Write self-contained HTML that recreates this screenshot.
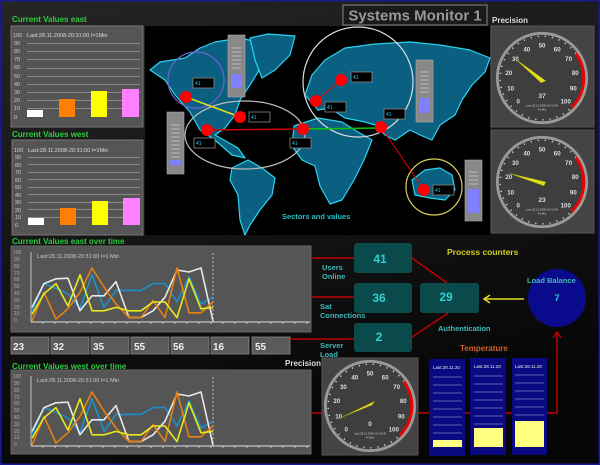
<!DOCTYPE html>
<html><head><meta charset="utf-8"><style>
html,body{margin:0;padding:0;background:#111;}
svg{display:block;font-family:"Liberation Sans",sans-serif;}
</style></head><body>
<svg width="600" height="465" viewBox="0 0 600 465" xmlns="http://www.w3.org/2000/svg">
<defs>
<linearGradient id="bg" x1="0" y1="0" x2="0.3" y2="1"><stop offset="0" stop-color="#252525"/><stop offset="1" stop-color="#060606"/></linearGradient>
<g id="gauge">
<circle r="48" fill="#3e3e3e"/>
<circle r="47" fill="none" stroke="#9a9a9a" stroke-width="3"/>
<circle r="44" fill="none" stroke="#fff" stroke-width="1.6" stroke-dasharray="1 6.5"/>
<path d="M35.6,-25.9 A44 44 0 0 1 31.1,31.1" fill="none" stroke="#e00" stroke-width="3"/>
<g fill="#ddd" font-size="6.5" font-weight="bold" text-anchor="middle">
<text x="-25" y="27">0</text><text x="-33" y="13">10</text><text x="-35" y="-3">20</text><text x="-28" y="-18">30</text><text x="-16" y="-28">40</text><text x="0" y="-32">50</text><text x="16" y="-28">60</text><text x="28" y="-18">70</text><text x="35" y="-3">80</text><text x="33" y="13">90</text><text x="25" y="27">100</text>
</g>
<text x="0" y="30" font-size="3" fill="#ccc" text-anchor="middle">Last:28.11.2008-20:31:00</text>
<text x="0" y="34" font-size="3" fill="#ccc" text-anchor="middle">I=1Min</text>
</g>
</defs>
<rect width="600" height="465" fill="url(#bg)"/>
<rect x="0.5" y="0.5" width="599" height="464" fill="none" stroke="#1a1a90" stroke-width="2"/>

<rect x="343" y="5" width="144" height="20" fill="#1a1a1a" stroke="#888" stroke-width="1"/>
<text x="415" y="20.5" font-size="15" font-weight="bold" fill="#999" text-anchor="middle">Systems Monitor 1</text>

<g font-weight="bold" font-size="8" fill="#2ecc40">
<text x="12" y="22">Current Values east</text>
<text x="12" y="137">Current Values west</text>
<text x="12" y="244">Current Values east over time</text>
<text x="12" y="369">Current Values west over time</text>
</g>
<rect x="11" y="26" width="132" height="101" fill="#555" stroke="#777"/>
<rect x="12" y="140" width="131" height="95" fill="#555" stroke="#777"/>
<g font-size="5.5" fill="#ddd">
<text x="27" y="37">Last:28.11.2008-20:31:00 I=1Min</text>
<text x="28" y="152">Last:28.11.2008-20:31:00 I=1Min</text>
</g>
<g stroke="#8a8a8a" stroke-width="1">
<line x1="27" y1="43.5" x2="140" y2="43.5"/><line x1="27" y1="51.5" x2="140" y2="51.5"/><line x1="27" y1="59.5" x2="140" y2="59.5"/><line x1="27" y1="68.5" x2="140" y2="68.5"/><line x1="27" y1="76.5" x2="140" y2="76.5"/><line x1="27" y1="84.5" x2="140" y2="84.5"/><line x1="27" y1="92.5" x2="140" y2="92.5"/><line x1="27" y1="100.5" x2="140" y2="100.5"/><line x1="27" y1="108.5" x2="140" y2="108.5"/>
<line x1="28" y1="157.5" x2="140" y2="157.5"/><line x1="28" y1="164.5" x2="140" y2="164.5"/><line x1="28" y1="172.5" x2="140" y2="172.5"/><line x1="28" y1="179.5" x2="140" y2="179.5"/><line x1="28" y1="187.5" x2="140" y2="187.5"/><line x1="28" y1="194.5" x2="140" y2="194.5"/><line x1="28" y1="202.5" x2="140" y2="202.5"/><line x1="28" y1="209.5" x2="140" y2="209.5"/><line x1="28" y1="217.5" x2="140" y2="217.5"/>
</g>
<g font-size="5.5" fill="#ccc">
<text x="13" y="37">100</text><text x="14" y="45">90</text><text x="14" y="53">80</text><text x="14" y="61">70</text><text x="14" y="69">60</text><text x="14" y="78">50</text><text x="14" y="86">40</text><text x="14" y="94">30</text><text x="14" y="102">20</text><text x="14" y="110">10</text><text x="14" y="119">0</text>
<text x="14" y="152">100</text><text x="15" y="159">90</text><text x="15" y="167">80</text><text x="15" y="174">70</text><text x="15" y="182">60</text><text x="15" y="189">50</text><text x="15" y="197">40</text><text x="15" y="204">30</text><text x="15" y="212">20</text><text x="15" y="219">10</text><text x="15" y="227">0</text>
</g>
<rect x="27" y="110" width="16" height="7" fill="#fff"/>
<rect x="59" y="99" width="16" height="18" fill="#ff7f00"/>
<rect x="91" y="91" width="16" height="26" fill="#ffff00"/>
<rect x="122" y="89" width="17" height="28" fill="#ff80ff"/>
<rect x="28" y="218" width="16" height="7" fill="#fff"/>
<rect x="60" y="208" width="16" height="17" fill="#ff7f00"/>
<rect x="92" y="201" width="16" height="24" fill="#ffff00"/>
<rect x="123" y="198" width="17" height="27" fill="#ff80ff"/>

<rect x="145" y="26" width="345" height="209" fill="#000"/>
<g fill="#0b5f80" stroke="#2ad4f0" stroke-width="1.2" stroke-linejoin="round">
<path d="M150,70 L160,62 L185,58 L200,48 L215,42 L240,38 L258,42 L265,55 L258,72 L250,85 L240,100 L235,115 L225,128 L215,135 L238,148 L245,158 L232,155 L215,140 L200,130 L190,112 L175,95 L165,80 Z"/>
<path d="M250,38 L268,34 L295,36 L290,55 L275,70 L262,78 L255,60 Z"/>
<path d="M232,168 L248,160 L262,168 L275,178 L272,195 L260,210 L250,225 L245,235 L240,220 L238,195 L230,180 Z"/>
<path d="M305,95 L312,75 L325,60 L345,48 L375,44 L410,42 L440,45 L470,50 L490,58 L485,72 L472,85 L462,100 L455,115 L440,125 L432,140 L420,135 L410,130 L395,140 L385,135 L375,125 L365,122 L345,118 L330,108 L318,110 Z"/>
<path d="M294,126 L318,118 L342,122 L358,132 L372,140 L364,160 L354,180 L342,200 L330,204 L320,186 L315,166 L302,160 L292,146 Z"/>
<path d="M412,180 L425,170 L440,168 L452,175 L455,190 L445,200 L430,198 L415,195 Z"/>
</g>
<g fill="none" stroke-width="1.2">
<circle cx="196" cy="80" r="28" stroke="#7060d0"/>
<ellipse cx="245" cy="135" rx="60" ry="34" stroke="#bbb"/>
<circle cx="358" cy="82" r="55" stroke="#ddd"/>
<circle cx="434" cy="187" r="28" stroke="#d8d060"/>
</g>
<line x1="186" y1="97" x2="240" y2="117" stroke="#e0e020" stroke-width="1.5"/>
<line x1="207" y1="130" x2="303" y2="129" stroke="#c00" stroke-width="1.5"/>
<line x1="303" y1="129" x2="381" y2="128" stroke="#10c010" stroke-width="1.5"/>
<line x1="316" y1="101" x2="341" y2="80" stroke="#e00" stroke-width="1"/>
<line x1="381" y1="127" x2="424" y2="190" stroke="#e00" stroke-width="1"/>
<g fill="#f00">
<circle cx="186" cy="97" r="6"/><circle cx="207" cy="130" r="6"/><circle cx="240" cy="117" r="6"/><circle cx="303" cy="129" r="6"/><circle cx="316" cy="101" r="6"/><circle cx="341" cy="80" r="6"/><circle cx="381" cy="127" r="6"/><circle cx="424" cy="190" r="6"/>
</g>
<g fill="#000" stroke="#888" stroke-width="0.8">
<rect x="193" y="78" width="21" height="10"/><rect x="249" y="112" width="21" height="10"/><rect x="194" y="138" width="21" height="10"/><rect x="290" y="138" width="21" height="10"/><rect x="351" y="72" width="21" height="10"/><rect x="325" y="102" width="21" height="10"/><rect x="384" y="109" width="21" height="10"/><rect x="433" y="185" width="21" height="10"/>
</g>
<g font-size="5" fill="#2ad4f0">
<text x="195" y="85">41</text><text x="251" y="119">41</text><text x="196" y="145">41</text><text x="292" y="145">41</text><text x="353" y="79">41</text><text x="327" y="109">41</text><text x="386" y="116">41</text><text x="435" y="192">41</text>
</g>
<g>
<rect x="228" y="35" width="17" height="62" fill="#888" stroke="#aaa" stroke-width="0.6"/>
<rect x="231" y="74" width="11" height="14" fill="#8080ff"/>
<rect x="167" y="112" width="17" height="62" fill="#888" stroke="#aaa" stroke-width="0.6"/>
<rect x="170" y="160" width="11" height="5" fill="#8080ff"/>
<rect x="416" y="60" width="17" height="62" fill="#888" stroke="#aaa" stroke-width="0.6"/>
<rect x="419" y="98" width="11" height="15" fill="#8080ff"/>
<rect x="465" y="160" width="17" height="61" fill="#888" stroke="#aaa" stroke-width="0.6"/>
<rect x="468" y="189" width="11" height="24" fill="#8080ff"/>
</g>
<g stroke="#ccc" stroke-width="0.7">
<path d="M232,48h9M232,52h9M232,56h9M232,60h9M232,64h9M232,68h9"/>
<path d="M171,125h9M171,129h9M171,133h9M171,137h9M171,141h9M171,145h9M171,149h9M171,153h9M171,157h9"/>
<path d="M420,72h9M420,76h9M420,80h9M420,84h9M420,88h9M420,92h9"/>
<path d="M469,172h9M469,176h9M469,180h9M469,184h9"/>
</g>
<text x="282" y="219" font-size="7.5" font-weight="bold" fill="#20c0c0">Sectors and values</text>

<text x="492" y="23" font-size="8" font-weight="bold" fill="#ddd">Precision</text>
<rect x="491" y="26" width="103" height="101" fill="#444" stroke="#555"/>
<rect x="491" y="130" width="103" height="103" fill="#444" stroke="#555"/>
<g transform="translate(542,78) scale(0.95)"><use href="#gauge"/><text x="0" y="21" font-size="7" font-weight="bold" fill="#ddd" text-anchor="middle">37</text>
<polygon points="-28,-20 4,3 -1,5" fill="#e0e020" stroke="#aa0" stroke-width="0.5"/></g>
<g transform="translate(542,182) scale(0.95)"><use href="#gauge"/><text x="0" y="21" font-size="7" font-weight="bold" fill="#ddd" text-anchor="middle">23</text>
<polygon points="-34,-9 4,0 2,4" fill="#e0e020" stroke="#aa0" stroke-width="0.5"/></g>

<rect x="11" y="246" width="300" height="86" fill="#555" stroke="#666"/>
<rect x="11" y="370" width="300" height="84" fill="#555" stroke="#666"/>
<g font-size="5.5" fill="#ccc">
<text x="37" y="258">Last:28.11.2008-20:31:00 I=1 Min</text>
<text x="37" y="382">Last:28.11.2008-20:31:00 I=1 Min</text>
</g>
<g font-size="5" fill="#aaa">
<text x="13" y="254">100</text><text x="14" y="261">90</text><text x="14" y="268">80</text><text x="14" y="275">70</text><text x="14" y="281">60</text><text x="14" y="288">50</text><text x="14" y="295">40</text><text x="14" y="302">30</text><text x="14" y="309">20</text><text x="14" y="315">10</text><text x="14" y="322">0</text>
<text x="13" y="378">100</text><text x="14" y="385">90</text><text x="14" y="392">80</text><text x="14" y="399">70</text><text x="14" y="405">60</text><text x="14" y="412">50</text><text x="14" y="419">40</text><text x="14" y="426">30</text><text x="14" y="433">20</text><text x="14" y="439">10</text><text x="14" y="446">0</text>
</g>
<g id="lc">
<line x1="31" y1="252" x2="31" y2="322" stroke="#ddd" stroke-width="0.8"/>
<line x1="31" y1="322" x2="310" y2="322" stroke="#ddd" stroke-width="1"/>
<path d="M43,322v2M55,322v2M67,322v2M79,322v2M91,322v2M103,322v2M115,322v2M127,322v2M139,322v2M151,322v2M163,322v2M175,322v2M187,322v2M199,322v2M211,322v2M223,322v2M235,322v2M247,322v2M259,322v2M271,322v2M283,322v2M295,322v2M307,322v2" stroke="#ddd" stroke-width="0.8"/>
<line x1="213" y1="253" x2="213" y2="322" stroke="#ddd" stroke-width="0.8" stroke-dasharray="2 2"/>
<g fill="none" stroke-width="1.6" stroke-linejoin="round">
<polyline stroke="#1e90c8" points="32,310.8 44,283.6 56,288.4 68,293.8 80,308.8 92,274.8 104,307.4 116,290.4 129,290.4 141,290.4 153,283.6 165,283.6 177,302 189,276.8 201,304 213,297.2"/>
<polyline stroke="#e8e8e8" points="32,307.4 44,283.6 56,278.8 68,278.2 80,310.8 92,295.8 104,295.8 116,281.6 129,317.6 141,317.6 153,310.8 165,297.2 177,270 189,272 201,268 213,321"/>
<polyline stroke="#e88010" points="32,321 44,292.4 56,319 68,308.8 80,292.4 92,268 104,287 116,304 129,317.6 141,317.6 153,300.6 165,317.6 177,268 189,312.8 201,312.8 213,302"/>
<polyline stroke="#e8e820" points="32,314.2 44,293.8 56,283.6 68,306 80,274.8 92,310.8 104,310.8 116,307.4 129,310.8 141,310.8 153,302 165,302 177,317.6 189,278.8 201,308.8 213,307.4"/>
</g>
</g>
<use href="#lc" transform="translate(0,124)"/>

<g fill="#5a5a5a" stroke="#888" stroke-width="0.8">
<rect x="11" y="337" width="38" height="17"/><rect x="51" y="337" width="38" height="17"/><rect x="91" y="337" width="38" height="17"/><rect x="131" y="337" width="38" height="17"/><rect x="171" y="337" width="38" height="17"/><rect x="211" y="337" width="38" height="17"/><rect x="252" y="337" width="38" height="17"/>
</g>
<g font-size="10" font-weight="bold" fill="#eee">
<text x="13" y="350">23</text><text x="53" y="350">32</text><text x="93" y="350">35</text><text x="134" y="350">55</text><text x="173" y="350">56</text><text x="213" y="350">16</text><text x="255" y="350">55</text>
</g>

<g stroke="#c00000" stroke-width="1.5" fill="none">
<line x1="311" y1="258" x2="354" y2="258"/>
<line x1="311" y1="297" x2="354" y2="297"/>
<line x1="290" y1="339" x2="354" y2="339"/>
<line x1="412" y1="258" x2="447" y2="283"/>
<line x1="412" y1="337" x2="448" y2="313"/>
<polyline points="311,413 322,413"/>
<polyline points="418,413 429,413"/>
<polyline points="465,413 470,413"/>
<polyline points="506,413 512,413"/>
<polyline points="547,413 557,413 557,333"/>
<polyline points="553,338 557,332 561,338"/>
</g>
<g fill="#0a4a4a">
<rect x="354" y="243" width="58" height="30" rx="3"/>
<rect x="354" y="283" width="58" height="30" rx="3"/>
<rect x="354" y="323" width="58" height="29" rx="3"/>
<rect x="420" y="283" width="59" height="30" rx="3"/>
</g>
<g font-size="12" font-weight="bold" fill="#30d0d0" text-anchor="middle">
<text x="380" y="263">41</text><text x="379" y="302">36</text><text x="379" y="341">2</text><text x="446" y="301">29</text>
</g>
<circle cx="557" cy="298" r="29" fill="#0a0a8c"/>
<g font-size="7.5" font-weight="bold" fill="#40b8b8">
<text x="322" y="270">Users</text><text x="322" y="279">Online</text>
<text x="320" y="309">Sat</text><text x="320" y="318">Connections</text>
<text x="320" y="348">Server</text><text x="320" y="357">Load</text>
<text x="438" y="331">Authentication</text>
<text x="527" y="283">Load Balance</text>
</g>
<text x="447" y="255" font-size="8.5" font-weight="bold" fill="#d0d020">Process counters</text>
<text x="557" y="301" font-size="9" font-weight="bold" fill="#30d0d0" text-anchor="middle">7</text>
<g stroke="#e0e020" stroke-width="1.5" fill="none">
<line x1="524" y1="299" x2="485" y2="299"/><polyline points="490,295 484,299 490,303"/>
</g>
<text x="460" y="351" font-size="8" font-weight="bold" fill="#d06030">Temperature</text>
<text x="285" y="366" font-size="8" font-weight="bold" fill="#ddd">Precision</text>

<rect x="322" y="358" width="96" height="97" fill="#444" stroke="#555"/>
<g transform="translate(370,406) scale(0.95)"><use href="#gauge"/><text x="0" y="21" font-size="7" font-weight="bold" fill="#ddd" text-anchor="middle">0</text>
<polygon points="-30,12 5,-5 2,-1" fill="#e0e020" stroke="#aa0" stroke-width="0.5"/></g>

<g fill="#0a0a80">
<rect x="429" y="359" width="36" height="97"/><rect x="470" y="358" width="36" height="97"/><rect x="512" y="358" width="35" height="97"/>
</g>
<g font-size="4.5" fill="#eee">
<text x="433" y="369">Last:28.11.20</text><text x="474" y="368">Last:28.11.20</text><text x="515" y="368">Last:28.11.20</text>
</g>
<g stroke="#7f80c0" stroke-width="0.8">
<path d="M433,377h29M433,385h29M433,393h29M433,401h29M433,409h29M433,417h29M433,425h29M433,433h29"/>
<path d="M474,376h29M474,384h29M474,392h29M474,400h29M474,408h29M474,416h29M474,424h29"/>
<path d="M515,375h29M515,383h29M515,391h29M515,399h29M515,407h29M515,415h29"/>
</g>
<g fill="#ffff80">
<rect x="433" y="440" width="29" height="7"/><rect x="474" y="428" width="29" height="19"/><rect x="515" y="421" width="29" height="26"/>
</g>
</svg>
</body></html>
